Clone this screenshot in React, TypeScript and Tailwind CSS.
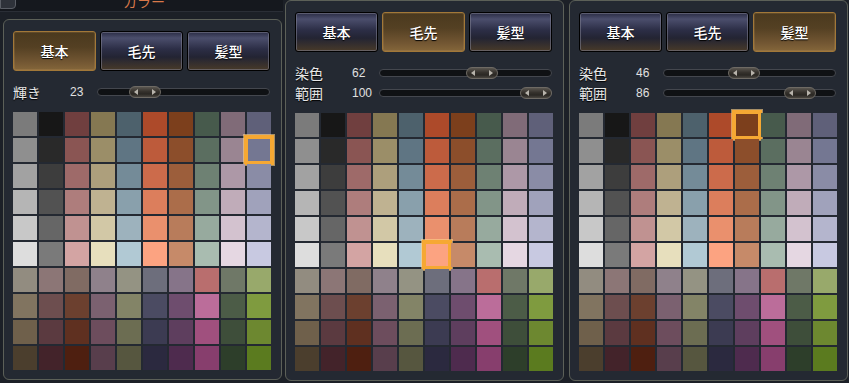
import React from 'react';

const PALETTE: string[][] = [
  ['#7b7b7b', '#171717', '#703f3f', '#857852', '#4d616c', '#ad4a2a', '#7c3f1c', '#475a4c', '#806b78', '#5f6079'],
  ['#8f8f8f', '#292929', '#8a5553', '#9b8e68', '#5f7583', '#bd5b3b', '#8c4e2b', '#5b6e60', '#9a8592', '#747792'],
  ['#a2a2a2', '#3d3d3d', '#9e6a69', '#ad9f7c', '#748b98', '#cc6b4b', '#9c5e3b', '#6e8173', '#ad98a7', '#8a8ca6'],
  ['#b5b5b5', '#525252', '#ae7d7c', '#bfb291', '#89a0ac', '#dc7e5c', '#ab6d4a', '#829588', '#c0acb9', '#a0a2bb'],
  ['#c8c8c8', '#666666', '#c09291', '#d2c8a6', '#9db2bd', '#ea906d', '#b87c5b', '#97aa9e', '#d3c2cf', '#b4b5cd'],
  ['#dddddd', '#7a7a7a', '#d3a4a3', '#e7dfbd', '#b1c9d4', '#fca381', '#c68a69', '#a9bcb0', '#e5d7e2', '#c8c9e1'],
  ['#928c80', '#8c7676', '#806b63', '#8f818b', '#949383', '#6d6e7c', '#867489', '#b96e6e', '#6f7867', '#98a96b'],
  ['#817460', '#6d4e4f', '#6c402f', '#7b6170', '#838467', '#4b4b62', '#6e4d6e', '#bb6d9a', '#4c5c47', '#7f9b3f'],
  ['#6f604b', '#5b3a40', '#5f3020', '#6d4d5d', '#6c6d52', '#3c3b52', '#5e3e5e', '#a0507e', '#3e4e3a', '#6d8830'],
  ['#4b3e2d', '#43232a', '#4e1f10', '#583e4c', '#56563f', '#2b293f', '#4e2b4e', '#873e6d', '#2d3e2a', '#5b7b1f'],
];

const TABS = ['基本', '毛先', '髪型'];

const TabButton = ({ label, active }: { label: string; active: boolean }) => (
  <div
    className={
      active
        ? 'h-[40px] w-[83px] flex items-center justify-center rounded-[3px] border border-[#a27838] bg-[linear-gradient(to_bottom,#4a391e_0%,#544023_40%,#735733_80%,#84663a_100%)] shadow-[inset_0_0_0_1px_rgba(255,200,120,0.12)]'
        : 'h-[40px] w-[83px] flex items-center justify-center rounded-[3px] border border-black bg-[linear-gradient(to_bottom,#2a2c44_0%,#4b4e6c_16%,#2c2e46_45%,#232433_66%,#483a29_100%)] shadow-[inset_0_0_0_1px_rgba(130,130,145,0.55)]'
    }
  >
    <span className="text-[14px] font-medium text-white [text-shadow:0_1px_1px_#000]">{label}</span>
  </div>
);

const Slider = ({ label, value }: { label: string; value: number }) => (
  <div className="h-[20px] flex items-center">
    <span className="w-[57px] text-[14px] text-[#e6e6e6] leading-none [text-shadow:0_1px_1px_#000]">{label}</span>
    <span className="w-[27px] text-[12px] text-[#e0e0e0] leading-none font-['Liberation_Sans_Narrow','Liberation_Sans',sans-serif]">
      {value}
    </span>
    <div className="relative w-[173px] h-[8px] rounded-full border border-[#44474e] bg-[#0f1114]">
      <div
        className="absolute top-[-3px] w-[32px] h-[12px] rounded-full border border-[#6e6a64] bg-[linear-gradient(to_bottom,#5a5650_0%,#36322d_45%,#2a2723_70%,#4a4640_100%)] flex items-center justify-between px-[4px]"
        style={{ left: `${(value / 100) * 141 - 1}px` }}
      >
        <svg width="4" height="6" viewBox="0 0 4 6">
          <path d="M4 0 L0 3 L4 6 Z" fill="#b8b4ac" />
        </svg>
        <svg width="4" height="6" viewBox="0 0 4 6">
          <path d="M0 0 L4 3 L0 6 Z" fill="#b8b4ac" />
        </svg>
      </div>
    </div>
  </div>
);

const Swatches = ({ sel }: { sel: [number, number] }) => (
  <div className="grid grid-cols-10 gap-[2px] w-[258px]">
    {PALETTE.map((row, r) =>
      row.map((c, i) => (
        <div key={`${r}-${i}`} className="relative h-[24px]" style={{ backgroundColor: c }}>
          {sel[0] === r && sel[1] === i && (
            <div className="absolute -inset-[3px] border-[4px] border-[#f6a833] outline outline-1 outline-[#ffd48a]/60" />
          )}
        </div>
      ))
    )}
  </div>
);

const Panel = ({
  active,
  sliders,
  sel,
  className,
}: {
  active: number;
  sliders: [string, number][];
  sel: [number, number];
  className: string;
}) => (
  <div className={`${className} w-[279px] rounded-[6px] border border-[#5c6058] bg-[#242932] px-[9px] pt-[11px] flex flex-col`}>
    <div className="flex gap-[4px]">
      {TABS.map((t, i) => (
        <TabButton key={t} label={t} active={i === active} />
      ))}
    </div>
    <div className="mt-[11px] flex flex-col">
      {sliders.map(([l, v]) => (
        <Slider key={l} label={l} value={v} />
      ))}
    </div>
    <div className="mt-[10px]">
      <Swatches sel={sel} />
    </div>
  </div>
);

export default function App() {
  return (
    <div className="w-[849px] h-[383px] bg-[#1c2027] flex overflow-hidden font-['Noto_Sans_CJK_JP','Noto_Sans',sans-serif]">
      <div className="w-[283px] flex flex-col">
        <div className="h-[12px] flex bg-[#15181e] border-b border-[#2a2e36]">
          <div className="w-[16px] h-[11px] -mt-[2px] rounded-br-[4px] border border-[#5a5e66] bg-[#2e323a]" />
          <span className="ml-[107px] -mt-[6px] text-[14px] leading-none text-[#d9784a]">カラー</span>
        </div>
        <Panel className="mt-[7px] ml-[3px] h-[361px]" active={0} sliders={[['輝き', 23]]} sel={[1, 9]} />
      </div>
      <div className="w-[283px]">
        <Panel className="ml-[2px] h-[381px]" active={1} sliders={[['染色', 62], ['範囲', 100]]} sel={[5, 5]} />
      </div>
      <div className="w-[283px]">
        <Panel className="ml-[3px] h-[381px]" active={2} sliders={[['染色', 46], ['範囲', 86]]} sel={[0, 6]} />
      </div>
    </div>
  );
}
